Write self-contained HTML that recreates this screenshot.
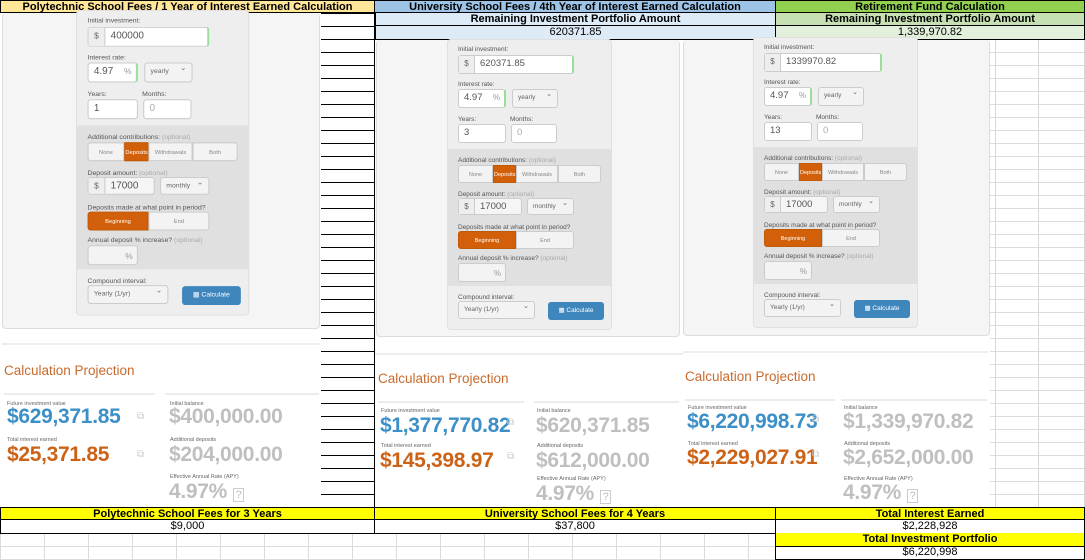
<!DOCTYPE html>
<html><head><meta charset="utf-8"><style>
*{box-sizing:border-box;margin:0;padding:0}
body{width:1085px;height:560px;position:relative;overflow:hidden;background:#fff;font-family:"Liberation Sans",Arial,sans-serif}
.a{position:absolute}
.cell{position:absolute;text-align:center;font-size:11px;line-height:13px;height:13px;white-space:nowrap;overflow:hidden}
.hb{font-weight:bold;font-family:"Liberation Sans Narrow","Liberation Sans",sans-serif}
.card{position:absolute;background:#f5f5f5;border:1px solid #dcdcdc;border-radius:4px}
.form{position:absolute;width:165px;height:291px;background:#eeeeee;border:1px solid #e0e0e0;border-radius:4px;transform-origin:0 0;font-size:7px;color:#444}
.form .l{position:absolute;left:10px;font-size:6.5px;color:#555;white-space:nowrap}
.form .o{color:#aaa}
.in{position:absolute;background:#fff;border:1px solid #ccc;border-radius:3px;font-size:9.5px;color:#555;line-height:16px;padding-left:5px;white-space:nowrap}
.ad{position:absolute;left:0;top:0;bottom:0;width:16px;background:#eee;border-right:1px solid #ccc;text-align:center;color:#666;font-size:8px}
.sel{position:absolute;background:#f3f3f3;border:1px solid #ccc;border-radius:3px;font-size:6.5px;color:#666;line-height:16px;padding-left:5px;white-space:nowrap}
.sel:after{content:"⌄";position:absolute;right:5px;top:-3px;font-size:7px}
.gray{position:absolute;left:0;width:100%;background:#e0e0e0}
.btn{position:absolute;text-align:center;font-size:5.5px;color:#888;line-height:18px;background:#f3f3f3;border:1px solid #ccc}
.or{background:#d2600a;color:#fff;border-color:#c05a08}
.calc{position:absolute;background:#3f86bd;color:#fff;font-size:6.5px;border-radius:3px;text-align:center;line-height:18px}
.gl{position:absolute;background:#d8d8d8}
.t{position:absolute;color:#c96a2c;font-size:13.5px;white-space:nowrap}
.lb{position:absolute;font-size:5.5px;color:#666;white-space:nowrap}
.v{position:absolute;font-size:21px;font-weight:bold;white-space:nowrap;letter-spacing:-0.3px}
.bl{color:#3d8fc7}.og{color:#cc6216}.gr{color:#bfbfbf}
.sep{position:absolute;height:2px;background:#ececec}
.ic{position:absolute;color:#ccc;font-size:10px}
</style></head><body>

<div class="a" style="left:321px;top:13px;width:53px;height:494px;background:repeating-linear-gradient(to bottom,#000 0,#000 1px,transparent 1px,transparent 13px)"></div>
<div class="a" style="left:374px;top:0;width:1px;height:507px;background:#000"></div>
<div class="a" style="left:990px;top:39px;width:95px;height:468px;background:repeating-linear-gradient(to bottom,#dcdcdc 0,#dcdcdc 1px,transparent 1px,transparent 13px)"></div>
<div class="gl" style="left:995px;top:39px;width:1px;height:468px"></div>
<div class="gl" style="left:1038px;top:39px;width:1px;height:468px"></div>
<div class="gl" style="left:1084px;top:39px;width:1px;height:468px"></div>

<div class="cell hb" style="left:0;top:0;width:375px;background:#ffe699;border:1px solid #000">Polytechnic School Fees / 1 Year of Interest Earned Calculation</div>
<div class="cell hb" style="left:375px;top:0;width:401px;background:#9dc3e6;border:1px solid #000;border-left:none">University School Fees / 4th Year of Interest Earned Calculation</div>
<div class="cell hb" style="left:775px;top:0;width:310px;background:#92d050;border:1px solid #000">Retirement Fund Calculation</div>
<div class="cell hb" style="left:375px;top:13px;width:401px;background:#ddebf7;border:1px solid #000;border-top:none">Remaining Investment Portfolio Amount</div>
<div class="cell hb" style="left:775px;top:13px;width:310px;background:#c6e0b4;border:1px solid #000;border-top:none">Remaining Investment Portfolio Amount</div>
<div class="cell" style="left:375px;top:26px;width:401px;height:14px;background:#ddebf7;border:1px solid #000;border-top:none">620371.85</div>
<div class="cell" style="left:775px;top:26px;width:310px;height:14px;background:#e2efda;border:1px solid #000;border-top:none">1,339,970.82</div>

<div class="card" style="left:2px;top:13px;width:318px;height:316px;border-top:none"></div>
<div class="card" style="left:376px;top:40px;width:304px;height:297px;border-top:none"></div>
<div class="card" style="left:683px;top:40px;width:307px;height:296px;border-top:none"></div>

<div class="form" style="left:76px;top:10px;transform:scale(1.05)">
<div class="l" style="top:6px">Initial investment:</div>
<div class="in" style="left:10px;top:15px;width:116px;height:19px;padding-left:21px;border-right:2px solid #9d9"><span class="ad">$</span>400000</div>
<div class="l" style="top:41px">Interest rate:</div>
<div class="in" style="left:10px;top:49px;width:48px;height:19px;border-right:2px solid #9d9">4.97<span style="position:absolute;right:4px;color:#999;font-size:8px">%</span></div>
<div class="sel" style="left:64px;top:49px;width:46px;height:19px">yearly</div>
<div class="l" style="top:76px">Years:</div><div class="l" style="top:76px;left:62px">Months:</div>
<div class="in" style="left:10px;top:84px;width:48px;height:19px">1</div>
<div class="in" style="left:63px;top:84px;width:46px;height:19px;color:#aaa">0</div>
<div class="gray" style="top:109px;height:137px"></div>
<div class="l" style="top:117px">Additional contributions: <span class="o">(optional)</span></div>
<div class="btn" style="left:10px;top:125px;width:35px;height:18px;border-radius:3px 0 0 3px">None</div>
<div class="btn or" style="left:45px;top:125px;width:23px;height:18px">Deposits</div>
<div class="btn" style="left:68px;top:125px;width:42px;height:18px">Withdrawals</div>
<div class="btn" style="left:110px;top:125px;width:43px;height:18px;border-radius:0 3px 3px 0">Both</div>
<div class="l" style="top:151px">Deposit amount: <span class="o">(optional)</span></div>
<div class="in" style="left:10px;top:158px;width:64px;height:17px;padding-left:21px;background:#f5f5f5"><span class="ad">$</span>17000</div>
<div class="sel" style="left:79px;top:158px;width:47px;height:17px">monthly</div>
<div class="l" style="top:184px">Deposits made at what point in period?</div>
<div class="btn or" style="left:10px;top:191px;width:58px;height:18px;border-radius:3px 0 0 3px">Beginning</div>
<div class="btn" style="left:68px;top:191px;width:58px;height:18px;border-radius:0 3px 3px 0">End</div>
<div class="l" style="top:215px">Annual deposit % increase? <span class="o">(optional)</span></div>
<div class="in" style="left:10px;top:223px;width:48px;height:19px;background:#f3f3f3"><span style="position:absolute;right:4px;color:#999;font-size:8px;line-height:19px">%</span></div>
<div class="l" style="top:254px">Compound interval:</div>
<div class="sel" style="left:10px;top:261px;width:77px;height:18px">Yearly (1/yr)</div>
<div class="calc" style="left:100px;top:262px;width:56px;height:18px">▦ Calculate</div>
</div>

<div class="form" style="left:447px;top:39px">
<div class="l" style="top:6px">Initial investment:</div>
<div class="in" style="left:10px;top:15px;width:116px;height:19px;padding-left:21px;border-right:2px solid #9d9"><span class="ad">$</span>620371.85</div>
<div class="l" style="top:41px">Interest rate:</div>
<div class="in" style="left:10px;top:49px;width:48px;height:19px;border-right:2px solid #9d9">4.97<span style="position:absolute;right:4px;color:#999;font-size:8px">%</span></div>
<div class="sel" style="left:64px;top:49px;width:46px;height:19px">yearly</div>
<div class="l" style="top:76px">Years:</div><div class="l" style="top:76px;left:62px">Months:</div>
<div class="in" style="left:10px;top:84px;width:48px;height:19px">3</div>
<div class="in" style="left:63px;top:84px;width:46px;height:19px;color:#aaa">0</div>
<div class="gray" style="top:109px;height:137px"></div>
<div class="l" style="top:117px">Additional contributions: <span class="o">(optional)</span></div>
<div class="btn" style="left:10px;top:125px;width:35px;height:18px;border-radius:3px 0 0 3px">None</div>
<div class="btn or" style="left:45px;top:125px;width:23px;height:18px">Deposits</div>
<div class="btn" style="left:68px;top:125px;width:42px;height:18px">Withdrawals</div>
<div class="btn" style="left:110px;top:125px;width:43px;height:18px;border-radius:0 3px 3px 0">Both</div>
<div class="l" style="top:151px">Deposit amount: <span class="o">(optional)</span></div>
<div class="in" style="left:10px;top:158px;width:64px;height:17px;padding-left:21px;background:#f5f5f5"><span class="ad">$</span>17000</div>
<div class="sel" style="left:79px;top:158px;width:47px;height:17px">monthly</div>
<div class="l" style="top:184px">Deposits made at what point in period?</div>
<div class="btn or" style="left:10px;top:191px;width:58px;height:18px;border-radius:3px 0 0 3px">Beginning</div>
<div class="btn" style="left:68px;top:191px;width:58px;height:18px;border-radius:0 3px 3px 0">End</div>
<div class="l" style="top:215px">Annual deposit % increase? <span class="o">(optional)</span></div>
<div class="in" style="left:10px;top:223px;width:48px;height:19px;background:#f3f3f3"><span style="position:absolute;right:4px;color:#999;font-size:8px;line-height:19px">%</span></div>
<div class="l" style="top:254px">Compound interval:</div>
<div class="sel" style="left:10px;top:261px;width:77px;height:18px">Yearly (1/yr)</div>
<div class="calc" style="left:100px;top:262px;width:56px;height:18px">▦ Calculate</div>
</div>

<div class="form" style="left:753px;top:37px">
<div class="l" style="top:6px">Initial investment:</div>
<div class="in" style="left:10px;top:15px;width:118px;height:19px;padding-left:21px;border-right:2px solid #9d9"><span class="ad">$</span>1339970.82</div>
<div class="l" style="top:41px">Interest rate:</div>
<div class="in" style="left:10px;top:49px;width:48px;height:19px;border-right:2px solid #9d9">4.97<span style="position:absolute;right:4px;color:#999;font-size:8px">%</span></div>
<div class="sel" style="left:64px;top:49px;width:46px;height:19px">yearly</div>
<div class="l" style="top:76px">Years:</div><div class="l" style="top:76px;left:62px">Months:</div>
<div class="in" style="left:10px;top:84px;width:48px;height:19px">13</div>
<div class="in" style="left:63px;top:84px;width:46px;height:19px;color:#aaa">0</div>
<div class="gray" style="top:109px;height:137px"></div>
<div class="l" style="top:117px">Additional contributions: <span class="o">(optional)</span></div>
<div class="btn" style="left:10px;top:125px;width:35px;height:18px;border-radius:3px 0 0 3px">None</div>
<div class="btn or" style="left:45px;top:125px;width:23px;height:18px">Deposits</div>
<div class="btn" style="left:68px;top:125px;width:42px;height:18px">Withdrawals</div>
<div class="btn" style="left:110px;top:125px;width:43px;height:18px;border-radius:0 3px 3px 0">Both</div>
<div class="l" style="top:151px">Deposit amount: <span class="o">(optional)</span></div>
<div class="in" style="left:10px;top:158px;width:64px;height:17px;padding-left:21px;background:#f5f5f5"><span class="ad">$</span>17000</div>
<div class="sel" style="left:79px;top:158px;width:47px;height:17px">monthly</div>
<div class="l" style="top:184px">Deposits made at what point in period?</div>
<div class="btn or" style="left:10px;top:191px;width:58px;height:18px;border-radius:3px 0 0 3px">Beginning</div>
<div class="btn" style="left:68px;top:191px;width:58px;height:18px;border-radius:0 3px 3px 0">End</div>
<div class="l" style="top:215px">Annual deposit % increase? <span class="o">(optional)</span></div>
<div class="in" style="left:10px;top:223px;width:48px;height:19px;background:#f3f3f3"><span style="position:absolute;right:4px;color:#999;font-size:8px;line-height:19px">%</span></div>
<div class="l" style="top:254px">Compound interval:</div>
<div class="sel" style="left:10px;top:261px;width:77px;height:18px">Yearly (1/yr)</div>
<div class="calc" style="left:100px;top:262px;width:56px;height:18px">▦ Calculate</div>
</div>

<div class="a" style="left:375px;top:340px;width:615px;height:167px;background:#fff"></div>
<div class="sep" style="left:2px;top:343px;width:318px;background:#eee"></div>
<div class="sep" style="left:375px;top:353px;width:308px;background:#eee"></div>
<div class="sep" style="left:683px;top:351px;width:305px;background:#eee"></div>

<!-- left results -->
<div class="t" style="left:4px;top:363px">Calculation Projection</div>
<div class="sep" style="left:4px;top:393px;width:151px"></div>
<div class="sep" style="left:165px;top:393px;width:154px"></div>
<div class="lb" style="left:7px;top:401px">Future investment value</div>
<div class="v bl" style="left:7px;top:405px">$629,371.85</div>
<div class="ic" style="left:137px;top:411px">⧉</div>
<div class="lb" style="left:170px;top:401px">Initial balance</div>
<div class="v gr" style="left:169px;top:405px">$400,000.00</div>
<div class="lb" style="left:7px;top:437px">Total interest earned</div>
<div class="v og" style="left:7px;top:443px">$25,371.85</div>
<div class="ic" style="left:137px;top:449px">⧉</div>
<div class="lb" style="left:170px;top:437px">Additional deposits</div>
<div class="v gr" style="left:169px;top:443px">$204,000.00</div>
<div class="lb" style="left:170px;top:474px">Effective Annual Rate (APY)</div>
<div class="v gr" style="left:169px;top:480px">4.97% <span style="font-size:11px;border:1px solid #ccc;padding:0 2px;font-weight:normal">?</span></div>

<!-- middle results -->
<div class="t" style="left:378px;top:371px">Calculation Projection</div>
<div class="sep" style="left:378px;top:401px;width:146px"></div>
<div class="sep" style="left:534px;top:401px;width:145px"></div>
<div class="lb" style="left:381px;top:408px">Future investment value</div>
<div class="v bl" style="left:380px;top:414px">$1,377,770.82</div>
<div class="ic" style="left:507px;top:417px">⧉</div>
<div class="lb" style="left:537px;top:408px">Initial balance</div>
<div class="v gr" style="left:536px;top:414px">$620,371.85</div>
<div class="lb" style="left:381px;top:443px">Total interest earned</div>
<div class="v og" style="left:380px;top:449px">$145,398.97</div>
<div class="ic" style="left:507px;top:451px">⧉</div>
<div class="lb" style="left:537px;top:443px">Additional deposits</div>
<div class="v gr" style="left:536px;top:449px">$612,000.00</div>
<div class="lb" style="left:537px;top:476px">Effective Annual Rate (APY)</div>
<div class="v gr" style="left:536px;top:482px">4.97% <span style="font-size:11px;border:1px solid #ccc;padding:0 2px;font-weight:normal">?</span></div>

<!-- right results -->
<div class="t" style="left:685px;top:369px">Calculation Projection</div>
<div class="sep" style="left:685px;top:399px;width:150px"></div>
<div class="sep" style="left:841px;top:399px;width:146px"></div>
<div class="lb" style="left:688px;top:405px">Future investment value</div>
<div class="v bl" style="left:687px;top:410px">$6,220,998.73</div>
<div class="ic" style="left:812px;top:414px">⧉</div>
<div class="lb" style="left:844px;top:405px">Initial balance</div>
<div class="v gr" style="left:843px;top:410px">$1,339,970.82</div>
<div class="lb" style="left:688px;top:441px">Total interest earned</div>
<div class="v og" style="left:687px;top:446px">$2,229,027.91</div>
<div class="ic" style="left:812px;top:449px">⧉</div>
<div class="lb" style="left:844px;top:441px">Additional deposits</div>
<div class="v gr" style="left:843px;top:446px">$2,652,000.00</div>
<div class="lb" style="left:844px;top:476px">Effective Annual Rate (APY)</div>
<div class="v gr" style="left:843px;top:481px">4.97% <span style="font-size:11px;border:1px solid #ccc;padding:0 2px;font-weight:normal">?</span></div>

<!-- bottom table -->
<div class="a" style="left:0;top:533px;width:775px;height:27px;background:repeating-linear-gradient(to bottom,#dcdcdc 0,#dcdcdc 1px,transparent 1px,transparent 13px)"></div>
<div class="a" style="left:0;top:533px;width:775px;height:27px;background:repeating-linear-gradient(to right,#dcdcdc 0,#dcdcdc 1px,transparent 1px,transparent 44px)"></div>
<div class="cell hb" style="left:0;top:507px;width:375px;background:#ffff00;border:1px solid #000">Polytechnic School Fees for 3 Years</div>
<div class="cell hb" style="left:374px;top:507px;width:402px;background:#ffff00;border:1px solid #000">University School Fees for 4 Years</div>
<div class="cell hb" style="left:775px;top:507px;width:310px;background:#ffff00;border:1px solid #000">Total Interest Earned</div>
<div class="cell" style="left:0;top:520px;width:375px;height:14px;border:1px solid #000;border-top:none">$9,000</div>
<div class="cell" style="left:374px;top:520px;width:402px;height:14px;border:1px solid #000;border-top:none">$37,800</div>
<div class="cell" style="left:775px;top:520px;width:310px;height:14px;border:1px solid #000;border-top:none">$2,228,928</div>
<div class="cell hb" style="left:775px;top:533px;width:310px;height:14px;background:#ffff00;border:1px solid #000;border-top:none">Total Investment Portfolio</div>
<div class="cell" style="left:775px;top:546px;width:310px;height:14px;border:1px solid #000;border-top:none">$6,220,998</div>
</body></html>
